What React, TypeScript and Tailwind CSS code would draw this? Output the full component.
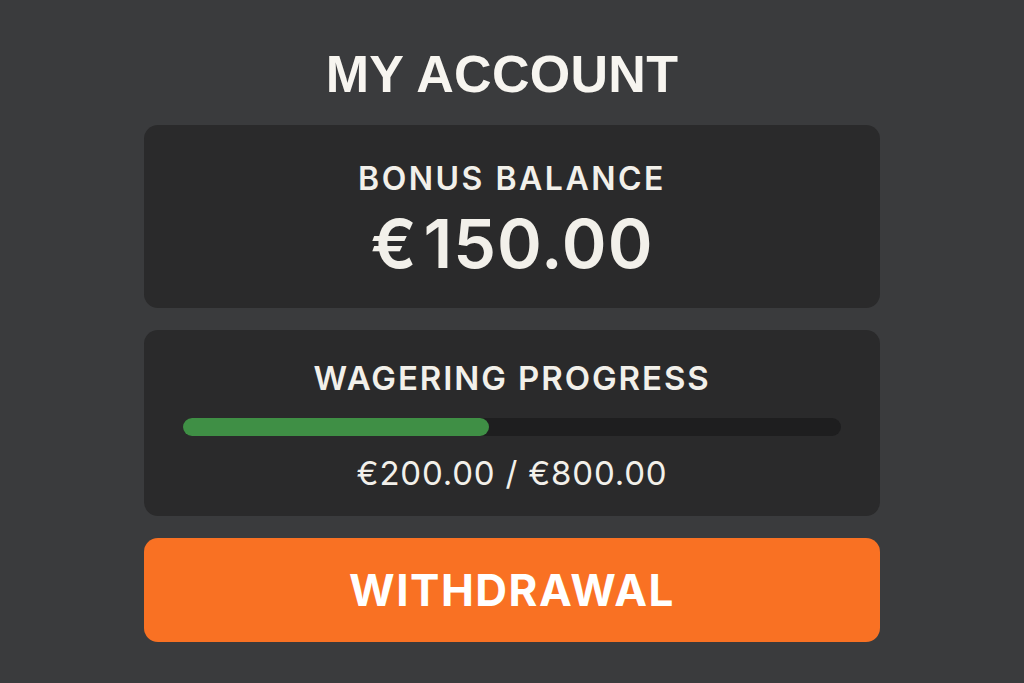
export default function App() {
  return (
    <div className="w-[1024px] h-[683px] bg-[#3a3b3d] flex flex-col items-center" style={{ fontFamily: "Inter, 'Noto Sans', sans-serif" }}>
      <h1 className="mt-[44px] pr-[20px] text-[52px] leading-[60px] font-bold text-[#f7f5f0] tracking-[0.3px]" style={{ fontFamily: "'Liberation Sans', Arial, sans-serif" }}>
        MY ACCOUNT
      </h1>
      <div className="mt-[21px] w-[736px] h-[183px] rounded-[14px] bg-[#2a2a2b] flex flex-col items-center pt-[34px]">
        <div className="text-[32px] leading-[40px] font-semibold text-[#f2f0ea] tracking-[2.5px]">BONUS BALANCE</div>
        <div className="mt-[6px] text-[68px] leading-[76px] font-semibold text-[#f2f0ea] tracking-[1px]">
          <span className="mr-[6px]">€</span>150.00
        </div>
      </div>
      <div className="mt-[22px] w-[736px] h-[186px] rounded-[14px] bg-[#2a2a2b] flex flex-col items-center pt-[28px] px-[39px]">
        <div className="text-[33px] leading-[40px] font-semibold text-[#f2f0ea] tracking-[1.9px]">WAGERING PROGRESS</div>
        <div className="mt-[20px] w-full h-[18px] rounded-full bg-[#1e1e1f]">
          <div className="h-full w-[306px] rounded-full bg-[#3f8f45]" />
        </div>
        <div className="mt-[17px] text-[33px] leading-[40px] text-[#f2f0ea] tracking-[0.8px]">€200.00 / €800.00</div>
      </div>
      <div className="mt-[22px] w-[736px] h-[104px] rounded-[14px] bg-[#f97123] flex items-center justify-center">
        <span className="text-[44px] font-bold text-white tracking-[1.5px]">WITHDRAWAL</span>
      </div>
    </div>
  );
}
